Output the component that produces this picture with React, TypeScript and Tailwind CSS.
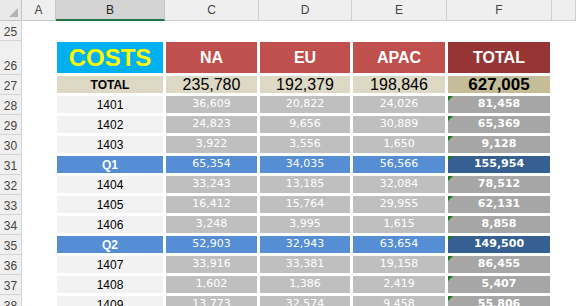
import React from 'react';

type Row = {
    num: number;
    label: string;
    values: string[];
    total: string;
    quarter?: boolean;
};

const rows: Row[] = [
    { num: 28, label: '1401', values: ['36,609', '20,822', '24,026'], total: '81,458' },
    { num: 29, label: '1402', values: ['24,823', '9,656', '30,889'], total: '65,369' },
    { num: 30, label: '1403', values: ['3,922', '3,556', '1,650'], total: '9,128' },
    { num: 31, label: 'Q1', values: ['65,354', '34,035', '56,566'], total: '155,954', quarter: true },
    { num: 32, label: '1404', values: ['33,243', '13,185', '32,084'], total: '78,512' },
    { num: 33, label: '1405', values: ['16,412', '15,764', '29,955'], total: '62,131' },
    { num: 34, label: '1406', values: ['3,248', '3,995', '1,615'], total: '8,858' },
    { num: 35, label: 'Q2', values: ['52,903', '32,943', '63,654'], total: '149,500', quarter: true },
    { num: 36, label: '1407', values: ['33,916', '33,381', '19,158'], total: '86,455' },
    { num: 37, label: '1408', values: ['1,602', '1,386', '2,419'], total: '5,407' },
    { num: 38, label: '1409', values: ['13,773', '32,574', '9,458'], total: '55,806' },
];

const cell = 'flex items-center justify-center border-l border-t border-r-2 border-b-2 border-white';

function RowNum({ n, className = '' }: { n: number; className?: string }) {
    return (
        <div className={`flex items-end justify-center pb-[2px] bg-[#f0f0f0] border-r border-b border-[#d4d4d4] text-[12px] text-[#444] leading-none ${className}`}>
            {n}
        </div>
    );
}

function ErrorMark() {
    return (
        <svg className="absolute left-0 top-0" width="5" height="5" viewBox="0 0 5 5">
            <polygon points="0,0 5,0 0,5" fill="#1f7a1f" />
        </svg>
    );
}

export default function App() {
    return (
        <div className="w-[576px] h-[306px] overflow-hidden bg-white font-['Liberation_Sans',Arial,sans-serif]">
            <div className="grid grid-cols-[22px_34px_109px_94px_93px_95px_105px_24px] grid-rows-[21px_20px_34px_20px] auto-rows-[20px]">
                {/* column headers */}
                <div className="relative bg-[#e9e9e9] border-r border-b border-[#c6c6c6]">
                    <svg className="absolute right-[3px] bottom-[3px]" width="9" height="9" viewBox="0 0 9 9">
                        <polygon points="9,0 9,9 0,9" fill="#b4b4b4" />
                    </svg>
                </div>
                <div className="flex items-center justify-center bg-[#efefef] border-r border-b border-[#c6c6c6] text-[12px] text-[#444]">A</div>
                <div className="flex items-center justify-center bg-[#d4d4d4] border-r border-[#c6c6c6] border-b-2 border-b-[#217346] text-[12px] text-[#262626]">B</div>
                {['C', 'D', 'E', 'F', ''].map((c, i) => (
                    <div key={i} className="flex items-center justify-center bg-[#efefef] border-r border-b border-[#d0d0d0] text-[12px] text-[#444]">{c}</div>
                ))}

                {/* row 25 */}
                <RowNum n={25} />
                <div className="col-span-7" />

                {/* row 26 */}
                <RowNum n={26} />
                <div />
                <div className={`${cell} bg-[#00b0f0] text-[24px] font-bold text-[#ffff00]`}>COSTS</div>
                {['NA', 'EU', 'APAC'].map((h) => (
                    <div key={h} className={`${cell} bg-[#c0504d] text-[16px] font-bold text-white`}>{h}</div>
                ))}
                <div className={`${cell} bg-[#963634] text-[16px] font-bold text-white`}>TOTAL</div>
                <div />

                {/* row 27 */}
                <RowNum n={27} />
                <div />
                <div className={`${cell} bg-[#ddd9c4] text-[12px] font-bold text-black`}>TOTAL</div>
                {['235,780', '192,379', '198,846'].map((v) => (
                    <div key={v} className={`${cell} bg-[#ddd9c4] text-[16px] text-black`}>{v}</div>
                ))}
                <div className={`${cell} bg-[#c4bd97] text-[17px] font-bold text-black`}>627,005</div>
                <div />

                {rows.map((r) => (
                    <React.Fragment key={r.num}>
                        <RowNum n={r.num} />
                        <div />
                        <div className={`${cell} text-[12px] ${r.quarter ? 'bg-[#558ed5] font-bold text-white' : 'bg-[#f2f2f2] text-black'}`}>
                            {r.label}
                        </div>
                        {r.values.map((v, i) => (
                            <div
                                key={i}
                                className={`${cell} font-['DejaVu_Sans',sans-serif] text-[11px] text-white ${r.quarter ? 'bg-[#558ed5]' : 'bg-[#bfbfbf]'}`}
                            >
                                {v}
                            </div>
                        ))}
                        <div className={`${cell} relative font-['DejaVu_Sans',sans-serif] text-[11px] font-bold text-white ${r.quarter ? 'bg-[#366092]' : 'bg-[#a6a6a6]'}`}>
                            <ErrorMark />
                            {r.total}
                        </div>
                        <div />
                    </React.Fragment>
                ))}
            </div>
        </div>
    );
}
